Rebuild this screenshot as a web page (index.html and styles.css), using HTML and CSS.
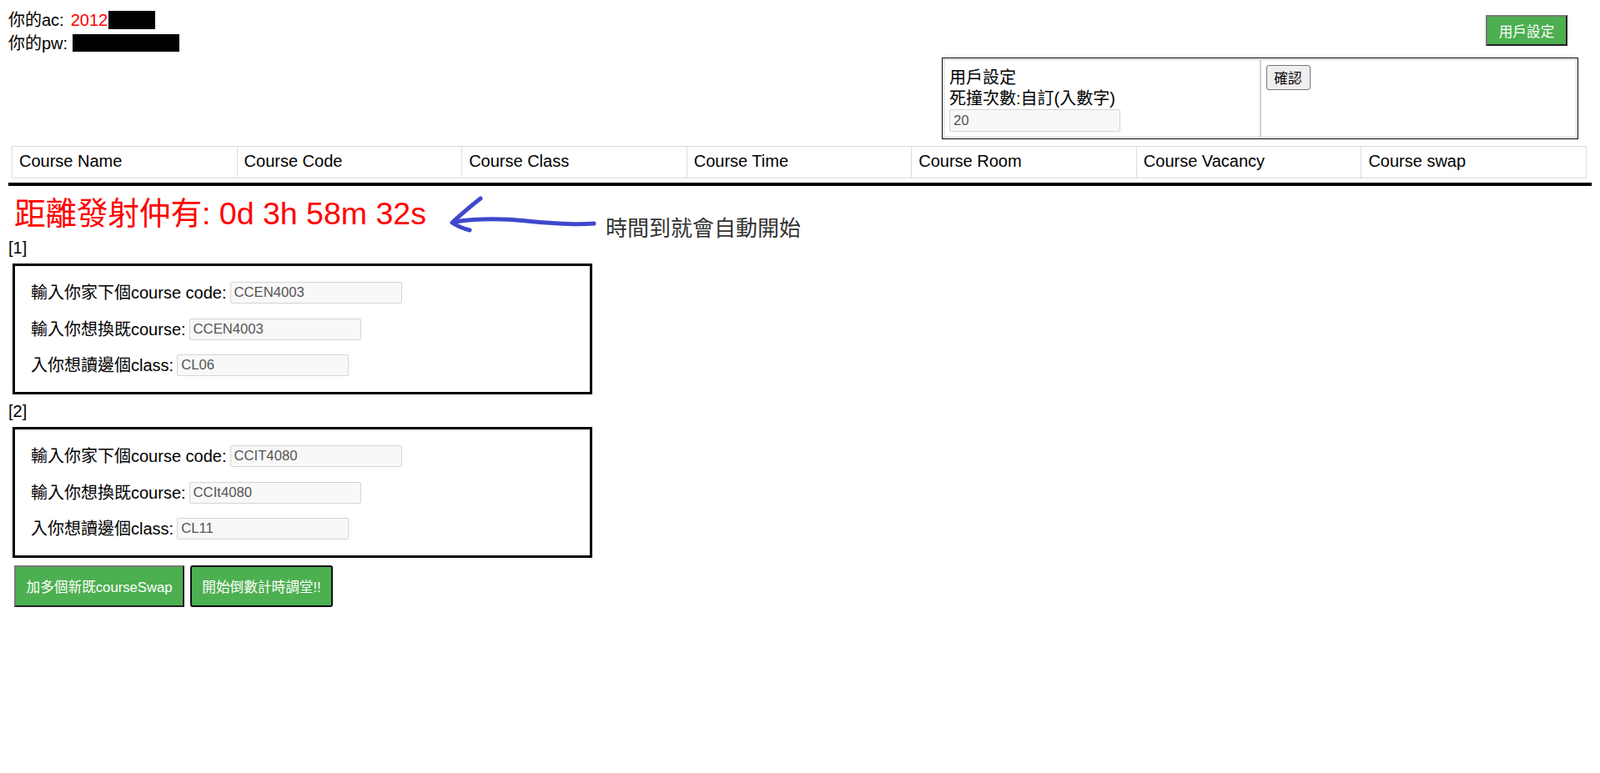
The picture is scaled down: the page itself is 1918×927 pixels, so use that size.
FILE: index.html
```html
<!DOCTYPE html>
<html lang="zh-Hant">
<head>
<meta charset="utf-8">
<title>Course Swap</title>
<link rel="stylesheet" href="styles.css">
</head>
<body>
<div class="page">
  <header class="top">
    <div class="account">
      <div class="line">你的ac: <span class="red">2012</span><span class="redact redact-ac"></span></div>
      <div class="line">你的pw: <span class="redact redact-pw"></span></div>
    </div>
    <button class="btn btn-top">用戶設定</button>
  </header>

  <div class="settings">
    <div class="cell cell-left">
      <div class="sline">用戶設定</div>
      <div class="sline">死撞次數:自訂(入數字)</div>
      <input class="field field-settings" value="20">
    </div>
    <div class="cell cell-right">
      <button class="btn-plain">確認</button>
    </div>
  </div>

  <table class="courses">
    <tr>
      <th>Course Name</th>
      <th>Course Code</th>
      <th>Course Class</th>
      <th>Course Time</th>
      <th>Course Room</th>
      <th>Course Vacancy</th>
      <th>Course swap</th>
    </tr>
  </table>

  <div class="rule"></div>

  <div class="countdown-row">
    <div class="countdown">距離發射仲有: 0d 3h 58m 32s</div>
    <svg class="arrow" width="190" height="50" viewBox="0 0 190 50">
      <path d="M44 5 Q26 19 10 34 Q19 40 31 43" fill="none" stroke="#3f48cc" stroke-width="5" stroke-linecap="round" stroke-linejoin="round"/>
      <path d="M13 33 C40 29 70 29 100 32 S160 37 180 35" fill="none" stroke="#3f48cc" stroke-width="5" stroke-linecap="round"/>
    </svg>
    <div class="note">時間到就會自動開始</div>
  </div>

  <div class="slot-label">[1]</div>
  <div class="swap">
    <div class="row"><span class="lbl">輸入你家下個course code:</span><input class="field" value="CCEN4003"></div>
    <div class="row"><span class="lbl">輸入你想換既course:</span><input class="field" value="CCEN4003"></div>
    <div class="row"><span class="lbl">入你想讀邊個class:</span><input class="field" value="CL06"></div>
  </div>

  <div class="slot-label second">[2]</div>
  <div class="swap">
    <div class="row"><span class="lbl">輸入你家下個course code:</span><input class="field" value="CCIT4080"></div>
    <div class="row"><span class="lbl">輸入你想換既course:</span><input class="field" value="CCIt4080"></div>
    <div class="row"><span class="lbl">入你想讀邊個class:</span><input class="field" value="CL11"></div>
  </div>

  <div class="actions">
    <button class="btn btn-add">加多個新既courseSwap</button>
    <button class="btn btn-start">開始倒數計時調堂!!</button>
  </div>
</div>
</body>
</html>
```

FILE: styles.css
```css
* {
  box-sizing: border-box;
}

html,
body {
  margin: 0;
  background: #fff;
}

body {
  font-family: "Liberation Sans", "Noto Sans CJK TC", sans-serif;
  font-size: 20px;
  color: #000;
}

.page {
  padding: 0 10px;
}

/* header */
.top {
  display: flex;
  justify-content: space-between;
  align-items: flex-start;
}

.account {
  padding-top: 10px;
}

.line {
  height: 28px;
  line-height: 28px;
  white-space: nowrap;
}

.red {
  color: #f00;
  margin-left: 2.5px;
}

.redact {
  display: inline-block;
  background: #000;
  vertical-align: top;
}

.redact-ac {
  width: 56px;
  height: 22px;
  margin: 3px 0 0 1px;
}

.redact-pw {
  width: 128px;
  height: 21px;
  margin-top: 3px;
}

.btn {
  font-family: "Liberation Sans", "Noto Sans CJK TC", sans-serif;
  font-size: 16.67px;
  color: #fff;
  background: #4caf50;
  padding: 0;
  cursor: pointer;
  white-space: nowrap;
}

.btn-top {
  width: 98px;
  height: 37px;
  margin: 18px 29px 0 0;
  border: 2px solid;
  border-color: #777 #222 #222 #777;
}

/* settings panel */
.settings {
  display: grid;
  grid-template-columns: 1fr 1fr;
  width: 763px;
  height: 98px;
  margin: 3px 16px 0 auto;
  border: 1px solid #000;
  padding: 1px;
}

.cell {
  border: 1px solid #cfcfcf;
}

.cell-left {
  padding: 9px 6px 5px;
}

.sline {
  line-height: 25px;
  white-space: nowrap;
}

.cell-right {
  padding: 6px;
}

.btn-plain {
  width: 53px;
  height: 30px;
  padding: 0;
  font-family: "Liberation Sans", "Noto Sans CJK TC", sans-serif;
  font-size: 16.67px;
  color: #000;
  background: #efefef;
  border: 1px solid #767676;
  border-radius: 3px;
}

.field {
  width: 206px;
  height: 26px;
  padding: 0 4px;
  border: 1px solid #d5d5d5;
  border-radius: 2px;
  background: #f8f8f8;
  color: #555;
  font-family: "Liberation Sans", sans-serif;
  font-size: 16.67px;
  flex: none;
}

.field-settings {
  display: block;
  width: 205px;
  height: 27px;
}

/* course table */
.courses {
  width: 1888px;
  margin: 8px 0 0 4px;
  border-collapse: collapse;
  table-layout: fixed;
}

.courses th {
  border: 1px solid #dcdcdc;
  padding: 6px 8px 9px;
  height: 38px;
  line-height: 20px;
  font-weight: normal;
  text-align: left;
  white-space: nowrap;
}

.rule {
  height: 4px;
  margin-top: 5px;
  background: #000;
}

/* countdown */
.countdown-row {
  display: flex;
  align-items: flex-start;
  height: 60px;
}

.countdown {
  margin: 11px 0 0 7px;
  color: #f00;
  font-size: 37.5px;
  line-height: 44px;
  white-space: nowrap;
}

.arrow {
  flex: none;
  margin: 10px 0 0 21px;
}

.note {
  margin: 36px 0 0 4px;
  color: #333;
  font-size: 26px;
  line-height: 30px;
  white-space: nowrap;
}

/* swap boxes */
.slot-label {
  line-height: 28px;
}

.slot-label.second {
  margin-top: 6px;
}

.swap {
  display: flex;
  flex-direction: column;
  gap: 17.5px;
  width: 695px;
  margin: 5px 0 0 5px;
  padding: 19px 20px 19px 19px;
  border: 3px solid #000;
}

.row {
  display: flex;
  align-items: center;
  gap: 4px;
  height: 26px;
  white-space: nowrap;
}

.lbl {
  line-height: 22px;
}

.actions {
  display: flex;
  gap: 7px;
  margin: 9px 0 0 7px;
}

.btn-add {
  width: 204px;
  height: 50px;
  border: 2px solid;
  border-color: #777 #222 #222 #777;
}

.btn-start {
  width: 171px;
  height: 50px;
  border: 2px solid #111;
  border-radius: 3px;
}
```
